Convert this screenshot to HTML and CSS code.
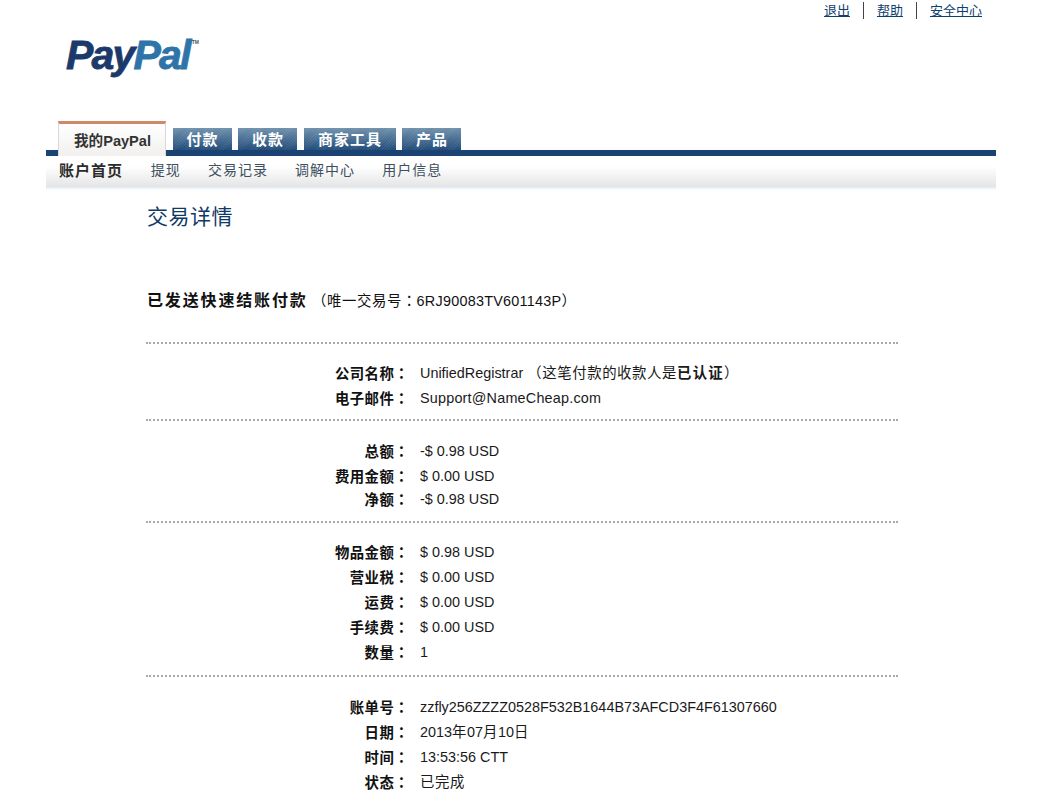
FILE: index.html
```html
<!DOCTYPE html>
<html lang="zh">
<head>
<meta charset="utf-8">
<title>交易详情</title>
<link rel="stylesheet" href="styles.css">
</head>
<body>
<div class="page">
  <header class="top">
    <div class="logo"><span class="pay">Pay</span><span class="pal">Pal</span><sup class="tm">TM</sup></div>
    <nav class="util"><a href="#">退出</a><a href="#">帮助</a><a href="#">安全中心</a></nav>
  </header>
  <nav class="tabs">
    <a class="tab active" href="#">我的PayPal</a>
    <a class="tab" href="#">付款</a>
    <a class="tab" href="#">收款</a>
    <a class="tab" href="#">商家工具</a>
    <a class="tab" href="#">产品</a>
  </nav>
  <nav class="subnav">
    <a class="current" href="#">账户首页</a>
    <a href="#">提现</a>
    <a href="#">交易记录</a>
    <a href="#">调解中心</a>
    <a href="#">用户信息</a>
  </nav>
  <main class="content">
    <h1>交易详情</h1>
    <h2>已发送快速结账付款 <span class="txid"><span class="c">（唯一交易号</span><i class="co">：</i>6RJ90083TV601143P<span class="c">）</span></span></h2>
    <section class="group">
      <div class="row"><b>公司名称<i class="co">：</i></b><span>UnifiedRegistrar <span class="c">（这笔付款的收款人是<strong>已认证</strong>）</span></span></div>
      <div class="row"><b>电子邮件<i class="co">：</i></b><span class="email">Support@NameCheap.com</span></div>
    </section>
    <section class="group wide">
      <div class="row"><b>总额<i class="co">：</i></b><span>-$ 0.98 USD</span></div>
      <div class="row"><b>费用金额<i class="co">：</i></b><span>$ 0.00 USD</span></div>
      <div class="row tight"><b>净额<i class="co">：</i></b><span>-$ 0.98 USD</span></div>
    </section>
    <section class="group">
      <div class="row"><b>物品金额<i class="co">：</i></b><span>$ 0.98 USD</span></div>
      <div class="row"><b>营业税<i class="co">：</i></b><span>$ 0.00 USD</span></div>
      <div class="row"><b>运费<i class="co">：</i></b><span>$ 0.00 USD</span></div>
      <div class="row"><b>手续费<i class="co">：</i></b><span>$ 0.00 USD</span></div>
      <div class="row"><b>数量<i class="co">：</i></b><span>1</span></div>
    </section>
    <section class="group last">
      <div class="row"><b>账单号<i class="co">：</i></b><span>zzfly256ZZZZ0528F532B1644B73AFCD3F4F61307660</span></div>
      <div class="row"><b>日期<i class="co">：</i></b><span>2013<span class="c">年</span>07<span class="c">月</span>10<span class="c">日</span></span></div>
      <div class="row"><b>时间<i class="co">：</i></b><span>13:53:56 CTT</span></div>
      <div class="row"><b>状态<i class="co">：</i></b><span><span class="c">已完成</span></span></div>
    </section>
  </main>
</div>
</body>
</html>
```
FILE: styles.css
```css
html, body { margin: 0; padding: 0; background: #fff; }
body {
  font-family: "Liberation Sans", "Noto Sans CJK SC", sans-serif;
  font-size: 14.4px;
  color: #1a1a1a;
  overflow: hidden;
  height: 790px;
}
.page { width: 950px; margin-left: 46px; }

.top { height: 121px; display: flex; justify-content: space-between; align-items: flex-start; }
.logo {
  margin: 32px 0 0 20px;
  font-family: "Liberation Sans", sans-serif;
  font-weight: 700;
  font-style: italic;
  font-size: 41px;
  line-height: 46px;
  letter-spacing: -1.8px;
  -webkit-text-stroke: 0.8px currentColor;
  display: flex;
}
.pay { color: #1b3a6b; }
.pal { color: #2f74a8; }
.tm { font-size: 5px; line-height: 8px; margin: 6px 0 0 2px; color: #555; font-style: normal; letter-spacing: 0; -webkit-text-stroke: 0; }
.util { display: flex; margin: 2px 14px 0 0; }
.util a { font-size: 13px; line-height: 17px; color: #0e3f6e; text-decoration: underline; padding: 0 13px; border-left: 1px solid #444; }
.util a:first-child { border-left: 0; }
.util a:last-child { padding-right: 0; }

.tabs {
  height: 35px;
  padding-left: 12px;
  display: flex;
  align-items: flex-start;
  gap: 6.5px;
  background: linear-gradient(#0000 29px, #1a4272 29px);
}
.tab {
  margin-top: 7px;
  height: 22px;
  width: 59px;
  box-sizing: border-box;
  padding-left: 1px;
  text-align: center;
  line-height: 24px;
  font-size: 15px;
  font-weight: 700;
  color: #fff;
  text-decoration: none;
  letter-spacing: 1px;
  background:
    repeating-linear-gradient(135deg, #ffffff12 0 1px, #0000 1px 2px),
    linear-gradient(#6f90ac, #1f4a78);
}
.tab:nth-child(4) { width: 92px; }
.tab.active {
  width: 108px;
  margin-top: 0;
  height: 35px;
  line-height: 35px;
  color: #333;
  letter-spacing: 0;
  font-size: 14.6px;
  background: linear-gradient(#fff, #f1f0ee);
  border: 1px solid #d8d8d8;
  border-top: 3px solid #cc8a68;
  border-bottom: 0;
}
.subnav {
  height: 34px;
  padding-left: 13px;
  display: flex;
  align-items: center;
  gap: 27.2px;
  background: linear-gradient(#fff 30%, #e6e6e6 88%, #dfe6ee 90%, #fff);
}
.subnav a { font-size: 14px; letter-spacing: 1px; color: #3d4f60; text-decoration: none; margin-top: -8px; }
.subnav .current { font-size: 15px; font-weight: 700; color: #2b2b2b; margin-right: 0.5px; }

.content { margin-left: 100px; width: 752px; }
h1 { margin: 14px 0 0 1px; font-size: 21px; line-height: 26px; font-weight: 400; color: #0f3a66; letter-spacing: 0.5px; }
h2 { margin: 59px 0 0 1px; font-size: 16px; line-height: 22px; font-weight: 700; color: #111; letter-spacing: 1.85px; word-spacing: -2px; }
.txid { font-size: 14.4px; font-weight: 400; letter-spacing: 0.25px; word-spacing: 0; }
.c { letter-spacing: 0.6px; }
.co { font-family: "Noto Sans CJK TC", sans-serif; font-style: normal; font-feature-settings: "locl" 0; }

.group { border-top: 2px dotted #aaa; padding: 17px 0 8px; }
.group.wide { padding: 18px 0 11px; }
.group:nth-of-type(3) { padding-bottom: 10px; }
.group.last { padding-top: 18px; }
h2 + .group { margin-top: 30px; }
.row { height: 25px; line-height: 25px; display: flex; }
.row.tight { height: 21px; line-height: 21px; }
.row b { width: 263px; text-align: right; color: #111; letter-spacing: 0.4px; flex: none; margin-top: -1px; }
.row > span { margin-left: 11px; }
.row > .email { letter-spacing: 0.2px; }
.row strong { font-weight: 700; letter-spacing: 1.2px; }
```
